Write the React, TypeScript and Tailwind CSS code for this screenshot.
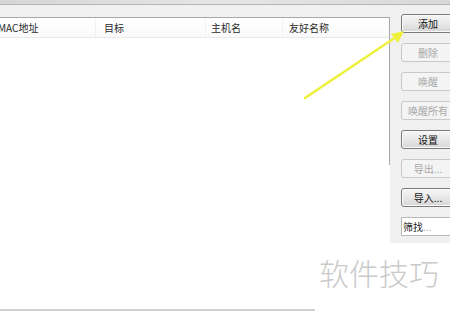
import React from "react";

const Btn = ({ label, disabled }: { label: string; disabled?: boolean }) => (
  <div
    className={
      disabled
        ? "h-[19px] w-[54px] shrink-0 rounded-[3px] border border-[#c9c9c9] bg-[#f4f4f4] text-[#a8a8a8] flex items-center justify-center text-[10px] leading-none"
        : "h-[19px] w-[54px] shrink-0 rounded-[3px] border border-[#7a7a7a] bg-gradient-to-b from-[#f6f6f6] via-[#e8e8e8] to-[#d6d6d6] text-[#111] flex items-center justify-center text-[10px] leading-none shadow-[inset_0_0_0_1px_#fbfbfb]"
    }
  >
    {label}
  </div>
);

export default function App() {
  return (
    <div className="relative w-[450px] h-[311px] overflow-hidden bg-white font-['Noto_Sans_CJK_SC',sans-serif]">
      {/* top band */}
      <div className="h-[5px] bg-gradient-to-r from-[#d6d6d6] via-[#e6e6e6] to-[#d8d8d8] border-b border-[#b4b4b4]" />
      <div className="flex h-[306px]">
        {/* left: list */}
        <div className="w-[390px] flex flex-col">
          <div className="h-[12px] bg-[#f1f1f1]" />
          <div className="flex-1 flex flex-col bg-white border-t border-r border-[#a9a9a9] max-h-[226px]">
            <div className="h-[20px] flex items-center text-[10px] text-[#2a2a2a] border-b border-[#e9e9e9] bg-gradient-to-b from-white to-[#fafafa]">
              <div className="w-[98px] -ml-[2px] border-r border-[#f2f2f2] h-full flex items-center">MAC地址</div>
              <div className="w-[110px] pl-[8px] border-r border-[#f2f2f2] h-full flex items-center">目标</div>
              <div className="w-[77px] pl-[5px] border-r border-[#f2f2f2] h-full flex items-center">主机名</div>
              <div className="flex-1 pl-[6px] h-full flex items-center">友好名称</div>
            </div>
            <div className="flex-1" />
          </div>
          <div className="flex-1 bg-white" />
        </div>
        {/* right: buttons */}
        <div className="w-[60px] flex flex-col">
          <div className="h-[238px] bg-[#f0f0f0] pl-[11px] pt-[9px] flex flex-col gap-[10px]">
            <Btn label="添加" />
            <Btn label="删除" disabled />
            <Btn label="唤醒" disabled />
            <Btn label="唤醒所有" disabled />
            <Btn label="设置" />
            <Btn label="导出..." disabled />
            <Btn label="导入..." />
            <div className="h-[19px] w-[54px] shrink-0 border border-[#b8b8b8] bg-white flex items-center pl-[1px] text-[10px] leading-none">
              <span className="text-[#222]">筛找</span>
              <span className="text-[#aaa]">...</span>
            </div>
          </div>
          <div className="flex-1 bg-white" />
        </div>
      </div>

      {/* watermark */}
      <div className="absolute left-[319px] top-[257px] text-[30px] leading-none text-[#cacaca] font-light">
        软件技巧
      </div>

      {/* bottom line */}
      <div className="absolute left-0 bottom-0 w-[315px] h-[2px] bg-[#cfcfcf]" />

      {/* yellow arrow */}
      <svg className="absolute left-0 top-0" width="450" height="311" viewBox="0 0 450 311">
        <line x1="305" y1="98" x2="396" y2="37" stroke="#eef03a" strokeWidth="2.5" strokeLinecap="round" />
        <polygon points="404,31 391,34 398,43" fill="#eef03a" />
      </svg>
    </div>
  );
}
